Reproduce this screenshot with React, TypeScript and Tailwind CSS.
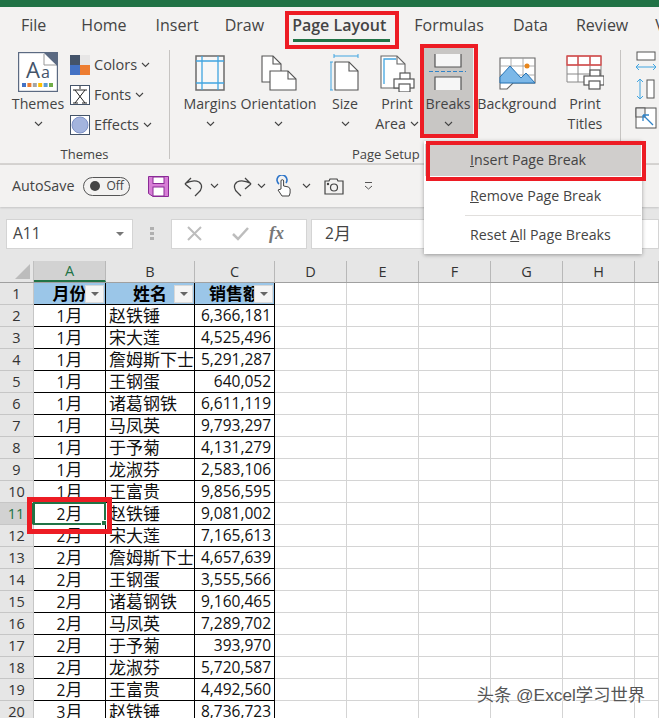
import React from 'react';

const UI = { fontFamily: '"Open Sans","Noto Sans CJK SC",sans-serif' };
const CELL = { fontFamily: '"Open Sans","Noto Sans CJK SC",sans-serif' };

const Chev = ({ className = '' }: { className?: string }) => (
  <svg width="9" height="6" viewBox="0 0 9 6" className={className} fill="none" stroke="#444" strokeWidth="1.1">
    <path d="M1 1l3.5 3.5L8 1" />
  </svg>
);

const BigBtn = ({ w, icon, l1, l2, chev = 'below', active = false, ml = 0 }: any) => (
  <div
    className={`flex flex-col items-center shrink-0 h-[90px] pt-[5px] ${active ? 'bg-[#c8c6c4]' : ''}`}
    style={{ width: w, marginLeft: ml }}
  >
    <div className="h-[42px] flex items-center justify-center">{icon}</div>
    <div className="text-[14.2px] leading-[20px] text-[#444] whitespace-nowrap">{l1}</div>
    <div className="text-[14.2px] leading-[20px] text-[#444] whitespace-nowrap flex items-center gap-[4px] h-[20px]">
      {l2 ? <span>{l2}</span> : null}
      {chev === 'below' ? <Chev /> : null}
    </div>
  </div>
);

const ThemesIcon = () => (
  <svg width="40" height="40" viewBox="0 0 40 40">
    <rect x=".6" y=".6" width="38.800" height="38.800" fill="#fff" stroke="#5b6a82" strokeWidth="1.200" />
    <path d="M26 1h13v13z" fill="#5b6a82" />
    <path d="M26 2v11h12" fill="#fff" stroke="#999" />
    <text x="8" y="26" fontSize="22" fill="#44546a" fontFamily="Open Sans">A</text>
    <text x="23" y="26" fontSize="16" fill="#44546a" fontFamily="Open Sans">a</text>
    {['#4472c4', '#ed7d31', '#a5a5a5', '#ffc000', '#5b9bd5', '#70ad47'].map((c, i) => (
      <rect key={c} x={4 + i * 5.4} y="31" width="4" height="4" fill={c} />
    ))}
  </svg>
);
const MarginsIcon = () => (
  <svg width="30" height="36" viewBox="0 0 30 36" fill="none">
    <rect x="1" y="1" width="28" height="34" fill="#f7f7f7" stroke="#6b6b6b" strokeWidth="1.5" />
    <path d="M7 1v34M23 1v34M1 6h28M1 28h28" stroke="#41a5e1" strokeWidth="1.3" />
  </svg>
);
const OrientIcon = () => (
  <svg width="36" height="36" viewBox="0 0 36 36" fill="#fff" stroke="#555" strokeWidth="1.1">
    <path d="M1 1h11l8 8v18H1z" />
    <path d="M12 1v8h8" fill="none" />
    <path d="M9 16h18l8 8v11H9z" />
    <path d="M27 16v8h8" fill="none" />
  </svg>
);
const SizeIcon = () => (
  <svg width="30" height="38" viewBox="0 0 30 38" fill="none">
    <path d="M4 2h24M4 0v4M28 0v4" stroke="#41a5e1" />
    <path d="M1 8v28M-1 8h4M-1 36h4" stroke="#41a5e1" />
    <path d="M5 8h14l9 9v19H5z" fill="#fff" stroke="#555" strokeWidth="1.1" />
    <path d="M19 8v9h9" stroke="#555" strokeWidth="1.1" />
  </svg>
);
const Printer = ({ x, y }: { x: number; y: number }) => (
  <g transform={`translate(${x} ${y})`} fill="#fff" stroke="#555" strokeWidth="1.2">
    <rect x="6" y="0" width="10" height="7" />
    <rect x="0" y="6" width="20" height="9" />
    <rect x="5" y="11" width="11" height="8" />
  </g>
);
const PrintAreaIcon = () => (
  <svg width="36" height="38" viewBox="0 0 36 38" fill="none">
    <path d="M2 2h16l8 8v24H2z" fill="#fff" stroke="#666" strokeWidth="1.1" />
    <path d="M18 2v8h8" stroke="#666" strokeWidth="1.1" />
    <path d="M5 30V5h12" stroke="#41a5e1" strokeWidth="1.3" />
    <Printer x={15} y={19} />
  </svg>
);
const BreaksIcon = () => (
  <svg width="38" height="38" viewBox="0 0 38 38" fill="none">
    <path d="M6 0v13h26V0" fill="#f6f6f6" stroke="#555" strokeWidth="1.2" />
    <path d="M0 17.5h37" stroke="#2f83c8" strokeWidth="1.2" strokeDasharray="4 2" />
    <path d="M6 36V23h26v13" fill="#f6f6f6" stroke="#555" strokeWidth="1.2" />
  </svg>
);
const BackgroundIcon = () => (
  <svg width="37" height="33" viewBox="0 0 37 33" fill="none">
    <path d="M1 1h35v25H14l-6 6H1z" fill="#fff" stroke="#666" strokeWidth="1.1" />
    <path d="M1 9h35M1 18h35M12 1v25M24 1v25" stroke="#999" strokeWidth="0.8" />
    <path d="M1 26V20l10-11 11 12 5-5 9 10z" fill="#7cb8e8" stroke="#2472b4" strokeWidth="1" />
    <circle cx="28" cy="9" r="2.5" fill="#e8861c" />
  </svg>
);
const TitlesIcon = () => (
  <svg width="38" height="36" viewBox="0 0 38 36" fill="none">
    <path d="M1 1h34v26H1z" fill="#fff" stroke="#888" />
    <path d="M1 10h34M1 19h34M12 1v26M24 1v26" stroke="#888" />
    <path d="M1 1h34v9H1zM12 1v9M24 1v9" stroke="#dd4b4b" strokeWidth="1.3" />
    <Printer x={18} y={15} />
  </svg>
);

const ColorsIcon = () => (
  <svg width="20" height="20" viewBox="0 0 20 20">
    <rect width="10" height="10" fill="#44546a" />
    <rect x="10" width="10" height="10" fill="#e7e6e6" />
    <rect y="10" width="10" height="10" fill="#4472c4" />
    <rect x="10" y="10" width="10" height="10" fill="#ed7d31" />
  </svg>
);
const FontsIcon = () => (
  <svg width="20" height="20" viewBox="0 0 20 20" fill="none">
    <rect x=".5" y=".5" width="19" height="19" fill="#fff" stroke="#44546a" />
    <path d="M10 1v3M3 5h14M5 5l10 13M15 5L5 18M3 18h5M12 18h5" stroke="#222" strokeWidth="1" />
  </svg>
);
const EffectsIcon = () => (
  <svg width="20" height="20" viewBox="0 0 20 20">
    <rect x=".5" y=".5" width="19" height="19" fill="#fff" stroke="#44546a" />
    <circle cx="10" cy="10" r="8" fill="#a3b4de" stroke="#7f93c8" />
  </svg>
);

const SmallItem = ({ icon, label }: any) => (
  <div className="flex items-center h-[20px] gap-[4px] text-[14.5px] text-[#444]">
    {icon}
    <span>{label}</span>
    <Chev />
  </div>
);

const Tab = ({ children, ml, bold }: any) => (
  <div className={`text-[16px] leading-[20px] text-[#444] whitespace-nowrap ${bold ? 'font-semibold' : ''}`} style={{ marginLeft: ml }}>
    {children}
  </div>
);

const Ribbon = () => (
  <div className="h-[120px] flex bg-[#f3f2f1] border-b-[2px] border-[#d5d3d1] relative">
    <div className="w-[170px] shrink-0 border-r border-[#c6c4c2] my-[5px] relative h-[109px] flex">
      <div className="w-[76px] shrink-0 flex flex-col items-center mt-[2px]">
        <ThemesIcon />
        <div className="text-[14.2px] leading-[20px] text-[#444] mt-[2px]">Themes</div>
        <Chev className="mt-[7px]" />
      </div>
      <div className="flex flex-col gap-[10px] mt-[5px] ml-[-6px]">
        <SmallItem icon={<ColorsIcon />} label="Colors" />
        <SmallItem icon={<FontsIcon />} label="Fonts" />
        <SmallItem icon={<EffectsIcon />} label="Effects" />
      </div>
      <div className="absolute left-0 w-full text-center top-[95px] text-[13px] leading-[18px] text-[#444]">Themes</div>
    </div>
    <div className="flex flex-col w-[450px] shrink-0 relative">
      <div className="flex pt-[2px] pl-[12px]">
        <BigBtn w={56} icon={<MarginsIcon />} l1="Margins" />
        <BigBtn w={75} ml={3} icon={<OrientIcon />} l1="Orientation" />
        <BigBtn w={40} ml={9} icon={<SizeIcon />} l1="Size" />
        <BigBtn w={44} ml={10} icon={<PrintAreaIcon />} l1="Print" l2="Area" />
        <BigBtn w={50} ml={4} icon={<BreaksIcon />} l1="Breaks" active />
        <BigBtn w={80} ml={4} icon={<BackgroundIcon />} l1="Background" chev="none" />
        <BigBtn w={44} ml={6} icon={<TitlesIcon />} l1="Print" l2="Titles" chev="none" />
      </div>
      <div className="absolute top-[100px] left-[182px] text-[13px] leading-[18px] text-[#444]">Page Setup</div>
    </div>
    <div className="border-l border-[#c6c4c2] my-[5px] h-[109px] pl-[14px] pt-[1px] flex flex-col gap-[7px]">
      <svg width="22" height="20" viewBox="0 0 22 20" fill="none">
        <rect x="2" y="1" width="18" height="8" fill="#fff" stroke="#555" />
        <path d="M1 16h20M1 16l3-3M1 16l3 3M21 16l-3-3M21 16l-3 3" stroke="#41a5e1" />
      </svg>
      <svg width="22" height="22" viewBox="0 0 22 22" fill="none">
        <rect x="12" y="2" width="7" height="18" fill="#fff" stroke="#555" />
        <path d="M5 1v20M5 1L2 4M5 1l3 3M5 21l-3-3M5 21l3-3" stroke="#41a5e1" />
      </svg>
      <svg width="22" height="22" viewBox="0 0 22 22" fill="none">
        <rect x="1" y="1" width="20" height="20" fill="#fff" stroke="#555" />
        <rect x="1" y="1" width="9" height="9" fill="#eee" stroke="#555" />
        <path d="M18 18L8 8M8 8v6M8 8h6" stroke="#2f83c8" strokeWidth="1.3" />
      </svg>
    </div>
  </div>
);

const Qat = () => (
  <div className="h-[42px] bg-[#f3f2f1] flex items-center text-[#444] relative shadow-[0_1px_2px_rgba(0,0,0,0.15)]">
    <span className="ml-[12px] text-[14.3px]">AutoSave</span>
    <div className="ml-[9px] w-[47px] h-[19px] rounded-full border border-[#555] flex items-center">
      <span className="ml-[6px] w-[10px] h-[10px] rounded-full bg-[#444]" />
      <span className="ml-[6px] text-[12px] leading-none">Off</span>
    </div>
    <svg className="ml-[18px]" width="21" height="21" viewBox="0 0 21 21">
      <path d="M.5.5h20v20H5l-4.500-3z" fill="#d77ed6" stroke="#8a2a96" />
      <rect x="5" y="1" width="11" height="6.500" fill="#fff" stroke="#8a2a96" />
      <rect x="5" y="11" width="11" height="9" fill="#fff" stroke="#8a2a96" />
    </svg>
    <svg className="ml-[15px]" width="20" height="21" viewBox="0 0 20 21" fill="none" stroke="#444" strokeWidth="1.3">
      <path d="M1 8l6 5M1 8l6-6M1 7.500C6 5 11 4 15 6c4 3 3 8-1 11l-3 3" />
    </svg>
    <Chev className="ml-[6px]" />
    <svg className="ml-[13px]" width="20" height="21" viewBox="0 0 20 21" fill="none" stroke="#444" strokeWidth="1.3">
      <path d="M19 8l-6 5M19 8l-6-6M19 7.500C14 5 9 4 5 6c-4 3-3 8 1 11l3 3" />
    </svg>
    <Chev className="ml-[5px]" />
    <svg className="ml-[10px]" width="16" height="22" viewBox="0 0 16 22" fill="none">
      <path d="M3 9a5 5 0 1 1 7-1" stroke="#2e75c8" strokeWidth="1.6" />
      <path d="M5 14V6a1.300 1.300 0 0 1 2.600 0v5l5 1 1.500 2v4l-1 3H6l-4-6z" fill="#fff" stroke="#444" />
    </svg>
    <Chev className="ml-[10px]" />
    <svg className="ml-[13px]" width="20" height="17" viewBox="0 0 20 17" fill="none" stroke="#444" strokeWidth="1.2">
      <path d="M1 3h4l1-2h7l1 2h5v13H1z" />
      <circle cx="10" cy="9.500" r="3.500" />
      <circle cx="4" cy="6" r=".6" fill="#444" />
    </svg>
    <svg className="ml-[20px]" width="9" height="8" viewBox="0 0 9 8" fill="none" stroke="#555">
      <path d="M1 .5h7M1 4l3.500 3L8 4" />
    </svg>
  </div>
);

const FormulaBar = () => (
  <div className="h-[54px] bg-[#e6e6e6] flex items-center pl-[6px] pb-[1px]">
    <div className="w-[127px] h-[30px] bg-white border border-[#d4d4d4] flex items-center justify-between pl-[6px] pr-[8px] text-[15.5px] text-[#444]">
      A11
      <span className="w-0 h-0 border-x-[4px] border-x-transparent border-t-[4px] border-t-[#777]" />
    </div>
    <div className="ml-[17px] w-[4px] flex flex-col gap-[2px]">
      <span className="h-[3px] bg-[#b0b0b0]" />
      <span className="h-[3px] bg-[#b0b0b0]" />
      <span className="h-[3px] bg-[#b0b0b0]" />
    </div>
    <div className="ml-[17px] w-[136px] h-[30px] bg-white border border-[#d4d4d4] flex items-center pl-[15px]">
      <svg width="15" height="15" viewBox="0 0 15 15" stroke="#bdbdbd" strokeWidth="2"><path d="M1 1l13 13M14 1L1 14" /></svg>
      <svg className="ml-[30px]" width="17" height="14" viewBox="0 0 17 14" fill="none" stroke="#bdbdbd" strokeWidth="2.500"><path d="M1 7l5 5L16 1" /></svg>
      <span className="ml-[20px] text-[18px] font-bold italic text-[#777]" style={{ fontFamily: '"Liberation Serif",serif' }}>fx</span>
    </div>
    <div className="ml-[4px] flex-1 h-[30px] bg-white border border-[#d4d4d4] flex items-center pl-[13px] text-[15.5px] text-[#444]">2<span className="text-[17px]">月</span></div>
  </div>
);

const colW = [72, 89, 80, 72, 72, 72, 72, 72, 24];
const colN = ['A', 'B', 'C', 'D', 'E', 'F', 'G', 'H', ''];

const ColHeaders = () => (
  <div className="flex h-[22px] bg-[#e6e6e6] border-b border-[#a0a0a0]">
    <div className="w-[34px] shrink-0 relative border-r border-[#c0c0c0]">
      <span className="absolute right-[3px] bottom-[3px] w-0 h-0 border-l-[15px] border-l-transparent border-b-[15px] border-b-[#bcbcbc]" />
    </div>
    {colN.map((c, i) => (
      <div
        key={i}
        className={`shrink-0 flex items-center justify-center text-[14.5px] border-r border-[#b8b8b8] ${i === 0 ? 'bg-[#d2d2d2] text-[#217346] border-b-[2px] border-b-[#217346]' : 'text-[#333]'}`}
        style={{ width: colW[i], ...CELL }}
      >
        {c}
      </div>
    ))}
  </div>
);

const Filter = () => (
  <span className="absolute right-[1px] top-[2px] w-[19px] h-[18px] bg-[#f4f4f4] border border-[#d8d8d8] flex items-center justify-center">
    <span className="w-0 h-0 border-x-[4px] border-x-transparent border-t-[4px] border-t-[#666]" />
  </span>
);

const names = ['赵铁锤', '宋大莲', '詹姆斯下士', '王钢蛋', '诸葛钢铁', '马凤英', '于予菊', '龙淑芬', '王富贵'];
const data: [string, string, string][] = [
  ['1', names[0], '6,366,181'], ['1', names[1], '4,525,496'], ['1', names[2], '5,291,287'],
  ['1', names[3], '640,052'], ['1', names[4], '6,611,119'], ['1', names[5], '9,793,297'],
  ['1', names[6], '4,131,279'], ['1', names[7], '2,583,106'], ['1', names[8], '9,856,595'],
  ['2', names[0], '9,081,002'], ['2', names[1], '7,165,613'], ['2', names[2], '4,657,639'],
  ['2', names[3], '3,555,566'], ['2', names[4], '9,160,465'], ['2', names[5], '7,289,702'],
  ['2', names[6], '393,970'], ['2', names[7], '5,720,587'], ['2', names[8], '4,492,560'],
  ['3', names[0], '8,736,723'],
];

const RowHead = ({ n }: { n: number }) => (
  <div className={`w-[34px] shrink-0 flex items-center justify-center text-[14.5px] border-r border-b border-[#c6c6c6] ${n === 11 ? 'bg-[#d2d2d2] text-[#217346] border-r-[#217346] border-r-[2px]' : 'bg-[#e6e6e6] text-[#333]'}`}>
    {n}
  </div>
);

const Blank = () => (
  <>
    {colW.slice(3).map((w, i) => (
      <div key={i} className="shrink-0 border-r border-b border-[#d4d4d4] bg-white" style={{ width: w }} />
    ))}
  </>
);

const Sheet = () => (
  <div className="text-[#111]" style={CELL}>
    <ColHeaders />
    <div className="flex h-[22px]">
      <RowHead n={1} />
      {['月份', '姓名', '销售额'].map((h, i) => (
        <div
          key={h}
          className="shrink-0 relative bg-[#9bc6e8] border-r border-b border-black flex items-center justify-center overflow-hidden font-bold text-[17px] text-black"
          style={{ width: colW[i] }}
        >
          <span className="whitespace-nowrap">{h}</span>
          <Filter />
        </div>
      ))}
      <Blank />
    </div>
    {data.map((r, i) => (
      <div key={i} className="flex h-[22px]">
        <RowHead n={i + 2} />
        <div className="shrink-0 border-r border-b border-black flex items-center justify-center text-[15.5px] bg-white relative" style={{ width: colW[0] }}>
          <span>{r[0]}<span className="text-[17px]">月</span></span>
          {i === 9 ? (
            <span className="absolute inset-[-1px] border-[2px] border-[#217346]">
              <span className="absolute right-[-3px] bottom-[-3px] w-[6px] h-[6px] bg-[#217346] border border-white" />
            </span>
          ) : null}
        </div>
        <div className="shrink-0 border-r border-b border-black flex items-center pl-[3px] text-[17px] whitespace-nowrap overflow-hidden bg-white" style={{ width: colW[1] }}>{r[1]}</div>
        <div className="shrink-0 border-r border-b border-black flex items-center justify-end pr-[3px] text-[15.5px] bg-white" style={{ width: colW[2] }}>{r[2]}</div>
        <Blank />
      </div>
    ))}
  </div>
);

const Menu = () => (
  <div className="absolute left-[424px] top-[141px] w-[218px] h-[113px] bg-white shadow-[0_1px_4px_rgba(0,0,0,0.35)] text-[14.2px] text-[#444] pt-[3px] px-[1px]">
    <div className="h-[32px] bg-[#d0cecc] flex items-center pl-[45px]"><span><u>I</u>nsert Page Break</span></div>
    <div className="h-[36px] flex items-center pl-[45px] pt-[4px]"><span><u>R</u>emove Page Break</span></div>
    <div className="h-[1px] bg-[#e1dfdd] ml-[40px] mt-[3px]" />
    <div className="h-[36px] flex items-center pl-[45px] pt-[2px]"><span>Reset <u>A</u>ll Page Breaks</span></div>
  </div>
);

export default function App() {
  return (
    <div className="w-[659px] h-[718px] overflow-hidden relative bg-white" style={UI}>
      <div className="h-[7px] bg-[#217346]" />
      <div className="h-[38px] bg-[#f3f2f1] flex items-center pl-[21px] pb-[2px] overflow-hidden">
        <Tab>File</Tab>
        <Tab ml={35}>Home</Tab>
        <Tab ml={29}>Insert</Tab>
        <Tab ml={26}>Draw</Tab>
        <Tab ml={28} bold>Page Layout</Tab>
        <Tab ml={28}>Formulas</Tab>
        <Tab ml={29}>Data</Tab>
        <Tab ml={28}>Review</Tab>
        <Tab ml={27}>View</Tab>
      </div>
      <Ribbon />
      <Qat />
      <FormulaBar />
      <Sheet />
      <Menu />
      {/* tab underline */}
      <div className="absolute left-[293px] top-[39px] w-[97px] h-[3px] bg-[#217346]" />
      {/* red annotations */}
      <div className="absolute left-[285px] top-[11px] w-[114px] h-[38px] border-[4px] border-[#ed1c24]" />
      <div className="absolute left-[420px] top-[44px] w-[58px] h-[94px] border-[4px] border-[#ed1c24]" />
      <div className="absolute left-[426px] top-[141px] w-[220px] h-[40px] border-[4px] border-[#ed1c24]" />
      <div className="absolute left-[27px] top-[497px] w-[85px] h-[37px] border-[5px] border-[#ed1c24]" />
      <div className="absolute right-[14px] bottom-[13px] text-[17.3px] leading-[20px] text-[#555] [text-shadow:1px_1px_0_#fff]" style={{ fontFamily: '"Liberation Sans","Noto Sans CJK SC",sans-serif' }}>
        头条 @Excel学习世界
      </div>
    </div>
  );
}
